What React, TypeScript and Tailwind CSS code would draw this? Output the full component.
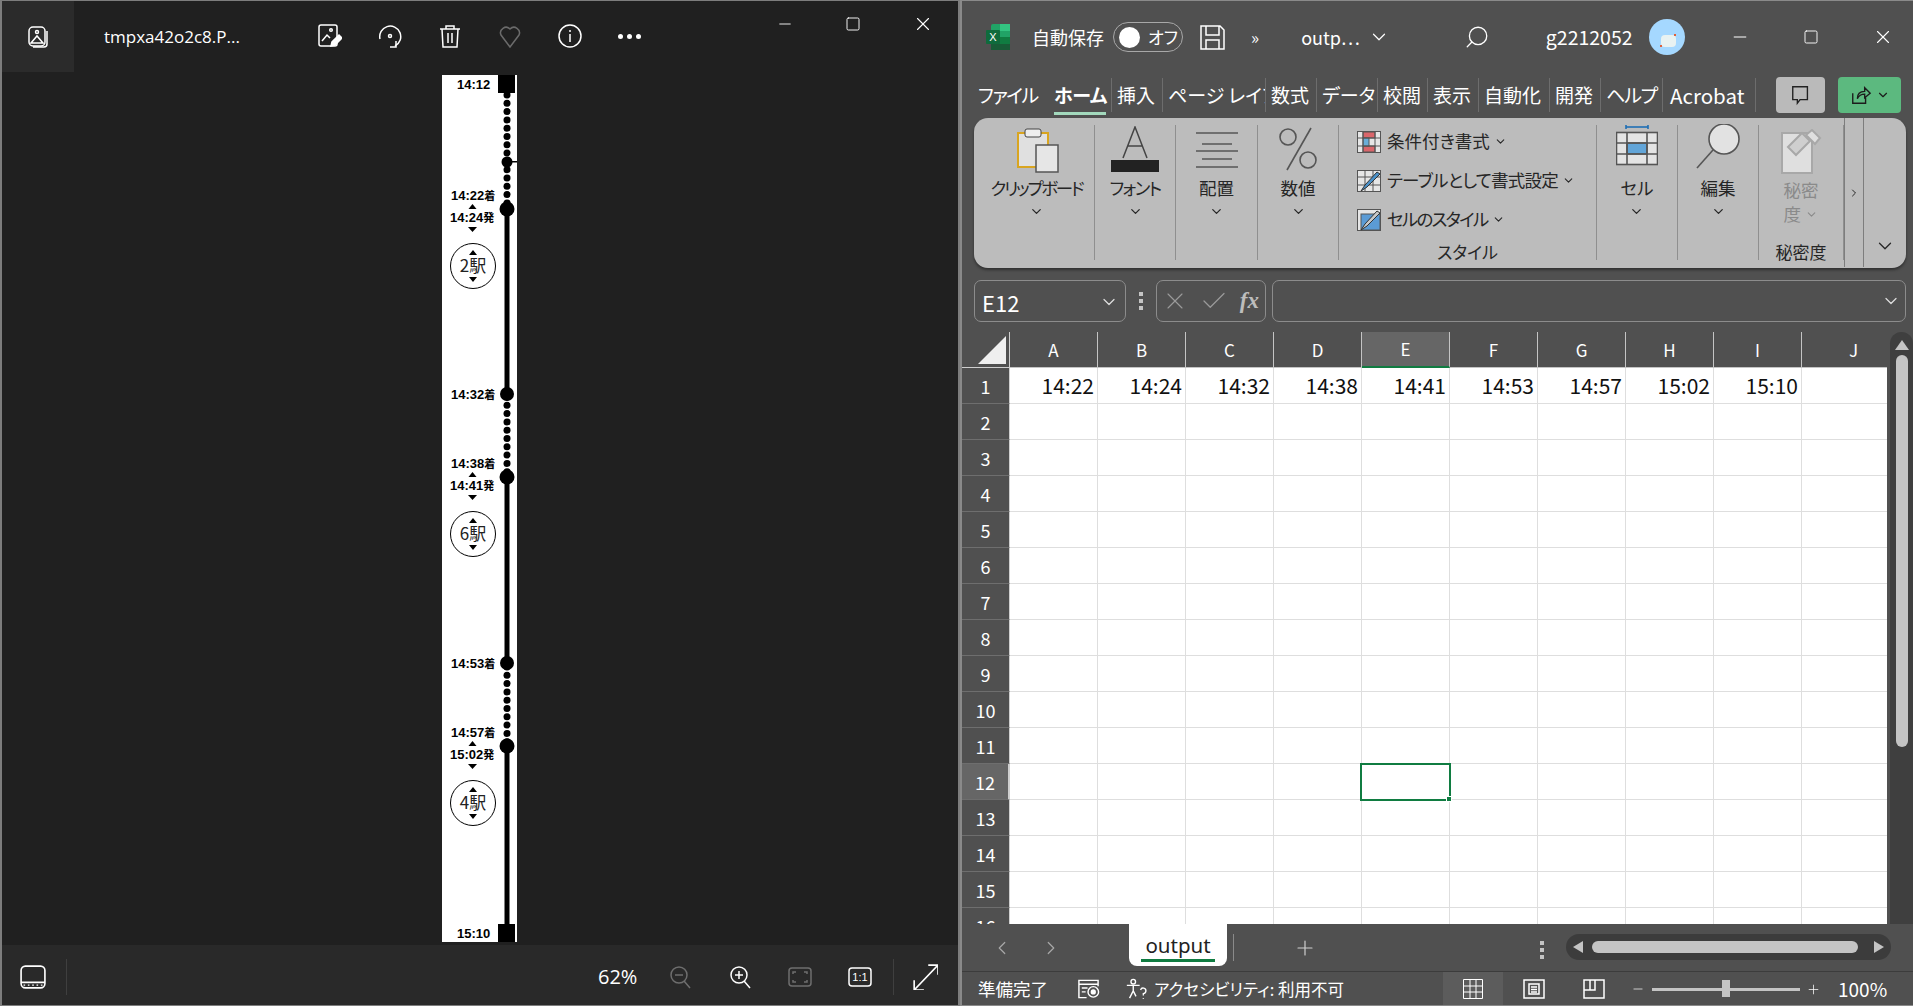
import React from 'react';
import { ChevronDown, ChevronLeft, ChevronRight, Plus, X, Check, Minus, Square, Search } from 'lucide-react';

const Ico: React.FC<{ w?: number; h?: number; vb?: string; className?: string; children: React.ReactNode }> = ({ w = 24, h = 24, vb = '0 0 24 24', className, children }) => (
  <svg width={w} height={h} viewBox={vb} fill="none" stroke="currentColor" strokeWidth={1.5} className={className}>
    {children}
  </svg>
);

function PhotoTopBar() {
  return (
    <div className="flex h-[71px] shrink-0 items-start text-white">
      <div className="flex h-[71px] w-[72px] items-center justify-center bg-[#2b2b2b]">
        <Ico>
          <rect x="3" y="2" width="16" height="19" rx="4" />
          <path d="M21 6v13a3 3 0 0 1-3 3H7" />
          <path d="M5 18l6-7 6 7z" />
          <circle cx="11" cy="7" r="1.5" />
        </Ico>
      </div>
      <div className="ml-[30px] mt-[24px] w-[202px] text-[17px] leading-[24px]">tmpxa42o2c8.P...</div>
      <div className="mt-[23px] flex items-center gap-[36px] pl-[12px]">
        <Ico>
          <rect x="1" y="1" width="18" height="21" rx="2" />
          <path d="M4 17l5-6 3 3" />
          <circle cx="13" cy="6" r="1.3" />
          <path d="M13 22l1-4 7-7 3 3-7 7z" fill="currentColor" />
        </Ico>
        <Ico>
          <path d="M2 15A10.5 10.5 0 1 1 17 22" />
          <circle cx="12" cy="12" r="1.5" />
          <path d="M18 17v6h-6" />
        </Ico>
        <Ico>
          <path d="M2 5h20M8 5V2h8v3M4 5l1 18h14l1-18M10 9v10M14 9v10" />
        </Ico>
        <Ico className="text-[#6b6b6b]">
          <path d="M12 23L3 11a5.5 5.5 0 0 1 9-6 5.5 5.5 0 0 1 9 6z" />
        </Ico>
        <Ico>
          <circle cx="12" cy="12" r="11" />
          <path d="M12 10v8M12 6v2" />
        </Ico>
        <div className="flex gap-[4px]">
          <span className="h-[5px] w-[5px] rounded-full bg-white" />
          <span className="h-[5px] w-[5px] rounded-full bg-white" />
          <span className="h-[5px] w-[5px] rounded-full bg-white" />
        </div>
      </div>
      <div className="ml-auto mr-[24px] mt-[12px] flex items-center gap-[51px]">
        <Minus size={18} strokeWidth={1.2} />
        <Square size={16} strokeWidth={1.4} />
        <X size={22} strokeWidth={1.2} />
      </div>
    </div>
  );
}

type Stop = { arr: string; dep: string; y: number };

// stations with an arrival and a departure time, y measured from the top of the image
const stops: Stop[] = [
  { arr: '14:22', dep: '14:24', y: 134 },
  { arr: '14:38', dep: '14:41', y: 402 },
  { arr: '14:57', dep: '15:02', y: 671 },
];
const circles = [
  { y: 191, label: '2駅' },
  { y: 459, label: '6駅' },
  { y: 728, label: '4駅' },
];

function Dots({ from, to }: { from: number; to: number }) {
  const list = [];
  for (let y = from; y < to; y += 8.3) list.push(y);
  return (
    <>
      {list.map((y) => (
        <circle key={y} cx="65" cy={y} r="3.5" fill="#000" />
      ))}
    </>
  );
}

function Tri({ y, down }: { y: number; down?: boolean }) {
  return <path d={down ? `M26 ${y}h9l-4.5 5z` : `M26.5 ${y}h8l-4-5z`} fill="#000" />;
}

const stripText = "text-[13px] font-bold [font-family:'Liberation_Sans','Noto_Sans_CJK_JP',sans-serif]";

function Strip() {
  return (
    <svg width="75" height="867" viewBox="0 0 75 867" className="block bg-white">
      <rect x="56" y="0" width="17" height="18" fill="#000" />
      <rect x="56" y="849" width="17" height="18" fill="#000" />
      <text x="15" y="14" className={stripText}>14:12</text>
      <text x="15" y="863" className={stripText}>15:10</text>
      <Dots from={20} to={130} />
      <circle cx="65" cy="87" r="5.5" fill="#000" />
      <rect x="65" y="86" width="10" height="1.5" fill="#000" />
      <rect x="62.5" y="134" width="5" height="185" fill="#000" />
      <Dots from={322} to={400} />
      <rect x="62.5" y="402" width="5" height="186" fill="#000" />
      <Dots from={592} to={668} />
      <rect x="62.5" y="671" width="5" height="180" fill="#000" />
      <circle cx="65" cy="319" r="7" fill="#000" />
      <text x="9" y="324" className={stripText}>14:32<tspan fontSize="11">着</tspan></text>
      <circle cx="65" cy="588" r="7" fill="#000" />
      <text x="9" y="593" className={stripText}>14:53<tspan fontSize="11">着</tspan></text>
      {stops.map((s) => (
        <g key={s.arr}>
          <circle cx="65" cy={s.y} r="7.5" fill="#000" />
          <text x="9" y={s.y - 9} className={stripText}>{s.arr}<tspan fontSize="11">着</tspan></text>
          <text x="8" y={s.y + 13} className={stripText}>{s.dep}<tspan fontSize="11">発</tspan></text>
          <Tri y={s.y} />
          <Tri y={s.y + 18} down />
        </g>
      ))}
      {circles.map((c) => (
        <g key={c.label}>
          <circle cx="31" cy={c.y} r="22.5" fill="none" stroke="#000" strokeWidth="1" />
          <path d={`M27 ${c.y - 11}h8l-4-5z M27 ${c.y + 11}h8l-4 5z`} fill="#000" />
          <text x="31" y={c.y + 6} textAnchor="middle" fill="#222" className="text-[17px] [font-family:'Noto_Sans_CJK_JP',sans-serif]">{c.label}</text>
        </g>
      ))}
    </svg>
  );
}

function PhotoBottomBar() {
  return (
    <div className="flex h-[60px] shrink-0 items-center bg-[#292929] pl-[18px] pt-[3px] text-white">
      <Ico w={26} h={26}>
        <rect x="1" y="2" width="22" height="20" rx="4" />
        <path d="M1 17h22M4 20v-1M8 20v-1M12 20v-1M16 20v-1M20 20v-1" />
      </Ico>
      <div className="ml-[20px] h-[36px] w-px bg-[#3f3f3f]" />
      <div className="ml-[531px] w-[44px] text-[20px]">62%</div>
      <Ico className="ml-[27px] text-[#6e6e6e]">
        <circle cx="10" cy="10" r="8" />
        <path d="M6 10h8M15 16l6 7" />
      </Ico>
      <Ico className="ml-[36px]">
        <circle cx="10" cy="10" r="8" />
        <path d="M6 10h8M10 6v8M15 16l6 7" />
      </Ico>
      <Ico className="ml-[35px] text-[#6e6e6e]">
        <rect x="1" y="3" width="22" height="18" rx="3" />
        <path d="M5 9V7h3M16 7h3v2M19 15v2h-3M8 17H5v-2" />
      </Ico>
      <Ico className="ml-[36px]">
        <rect x="1" y="3" width="22" height="18" rx="3" />
        <text x="12" y="16" textAnchor="middle" fontSize="11" fill="currentColor" stroke="none" fontFamily="Liberation Sans">1:1</text>
      </Ico>
      <div className="ml-[21px] h-[36px] w-px bg-[#3f3f3f]" />
      <Ico w={26} h={26} className="ml-[18px]">
        <path d="M2 15v9h9M15 1h9v9M2 24L24 1" />
      </Ico>
    </div>
  );
}

function PhotoWindow() {
  return (
    <div className="flex h-full w-[960px] shrink-0 flex-col border-x-2 border-y-[1px] border-[#7d7d7d] bg-[#202020] [font-family:'Open_Sans',sans-serif]">
      <PhotoTopBar />
      <div className="flex flex-1 items-center justify-start overflow-hidden pl-[440px]">
        <Strip />
      </div>
      <PhotoBottomBar />
    </div>
  );
}

function ExcelTitleBar() {
  return (
    <div className="flex h-[72px] shrink-0 items-center text-white">
      <svg width="24" height="26" viewBox="0 0 24 26" className="ml-[24px]">
        <rect x="5" y="0" width="19" height="26" rx="2" fill="#21a366" />
        <rect x="14" y="0" width="10" height="7" fill="#33c481" />
        <rect x="5" y="13" width="19" height="7" fill="#107c41" />
        <rect x="5" y="20" width="19" height="6" fill="#185c37" />
        <rect x="0" y="6" width="14" height="14" rx="1" fill="#0f6b3c" />
        <text x="7" y="17" textAnchor="middle" fontSize="11" fill="#fff" fontFamily="Liberation Sans">X</text>
      </svg>
      <span className="ml-[22px] text-[18px]">自動保存</span>
      <div className="ml-[9px] flex h-[30px] w-[70px] items-center rounded-full border border-[#a8a8a8] pl-[5px]">
        <span className="h-[21px] w-[21px] rounded-full bg-white" />
        <span className="ml-[8px] text-[17px]">オフ</span>
      </div>
      <Ico w={27} h={27} vb="0 0 27 27" className="ml-[16px]">
        <path d="M2 2h19l4 4v19H2zM7 2v9h13V2M7 25v-9h13v9" />
      </Ico>
      <span className="ml-[25px] text-[17px]">»</span>
      <span className="ml-[42px] text-[18px]">outp…</span>
      <ChevronDown size={22} strokeWidth={1.3} className="ml-[8px]" />
      <Search size={26} strokeWidth={1.2} className="ml-[74px] -scale-x-100" />
      <span className="ml-[56px] text-[19.5px]">g2212052</span>
      <div className="relative ml-[16px] h-[36px] w-[36px] overflow-hidden rounded-full bg-[#a5d8ff]">
        <span className="absolute left-[12px] top-[16px] h-[12px] w-[15px] rounded-[4px] bg-[#e8f2f2]" />
        <span className="absolute left-[11px] top-[26px] h-[2px] w-[2px] bg-[#e0603a]" />
        <span className="absolute left-[25px] top-[15px] h-[2px] w-[2px] bg-[#e0603a]" />
      </div>
      <Minus size={20} strokeWidth={1.2} className="ml-[45px]" />
      <Square size={16} strokeWidth={1.4} className="ml-[53px]" />
      <X size={22} strokeWidth={1.2} className="ml-[53px]" />
    </div>
  );
}

const tabs: { label: string; w: string; extra?: string }[] = [
  { label: '挿入', w: 'w-[51px]' },
  { label: 'ページ レイアウト', w: 'w-[103px]' },
  { label: '数式', w: 'w-[51px]' },
  { label: 'データ', w: 'w-[61px]' },
  { label: '校閲', w: 'w-[50px]' },
  { label: '表示', w: 'w-[51px]' },
  { label: '自動化', w: 'w-[71px]' },
  { label: '開発', w: 'w-[51px]' },
  { label: 'ヘルプ', w: 'w-[62px]', extra: 'tracking-[-0.06em]' },
  { label: 'Acrobat', w: 'w-[93px]', extra: 'pl-[7px] text-[20.5px]' },
];

function ExcelTabs() {
  return (
    <div className="flex h-[45px] shrink-0 items-start pt-[5px] text-[19px] text-white">
      <span className="ml-[16px] w-[76px] leading-[34px] tracking-[-0.08em]">ファイル</span>
      <div className="relative w-[57px] font-bold leading-[34px] tracking-[-0.02em]">
        ホーム
        <span className="absolute bottom-[-3px] left-0 h-[3px] w-[52px] bg-[#a3d9bd]" />
      </div>
      {tabs.map((t) => (
        <div key={t.label} className={`h-[34px] overflow-hidden border-l border-[#6d6d6d] px-[5px] leading-[34px] whitespace-nowrap ${t.w} ${t.extra ?? ''}`}>
          {t.label}
        </div>
      ))}
      <div className="h-[34px] border-l border-[#6d6d6d]" />
      <div className="ml-[20px] -mt-[1px] flex h-[36px] w-[49px] items-center justify-center rounded-[4px] bg-[#bababa] text-[#222]">
        <Ico w={22} h={24}>
          <path d="M3 3h16v14h-8l-3 4v-4H3z" />
        </Ico>
      </div>
      <div className="ml-[13px] -mt-[1px] flex h-[36px] w-[63px] items-center justify-center gap-[4px] rounded-[4px] bg-[#5cb97f] text-[#1c1c1c]">
        <Ico w={22} h={24}>
          <path d="M3 10v11h14v-6M8 16c0-6 4-8 8-8V4l6 6-6 5v-4c-3 0-6 1-8 5z" />
        </Ico>
        <ChevronDown size={14} strokeWidth={2} />
      </div>
    </div>
  );
}

function LabelBtn({ label, className }: { label: string; className?: string }) {
  return (
    <div className="flex flex-col items-center">
      <span className={`mt-[3px] text-[17.5px] leading-[26px] whitespace-nowrap ${className ?? ''}`}>{label}</span>
      <ChevronDown size={15} strokeWidth={2} className="mt-[3px]" />
    </div>
  );
}

const Group: React.FC<{ w: string; children: React.ReactNode; title?: string }> = ({ w, children, title }) => (
  <div className={`relative flex h-[135px] flex-col items-center border-r border-[#8f8f8f] ${w}`}>
    {children}
    {title && <span className="absolute bottom-[-4px] left-0 right-0 text-center text-[17px] leading-[24px]">{title}</span>}
  </div>
);

function StyleRow({ icon, label, className }: { icon: React.ReactNode; label: string; className?: string }) {
  return (
    <div className="flex h-[39px] items-center">
      {icon}
      <span className={`ml-[6px] text-[17.5px] whitespace-nowrap ${className ?? ''}`}>{label}</span>
      <ChevronDown size={13} strokeWidth={2} className="ml-[4px]" />
    </div>
  );
}

function Ribbon() {
  return (
    <div className="ml-[12px] mr-[7px] flex h-[150px] shrink-0 items-start rounded-[14px] bg-[#bcbcbc] pt-[7px] text-[#262626] shadow-[0_2px_3px_rgba(0,0,0,0.4)]">
      <Group w="w-[121px] pl-[5px]">
        <svg width="42" height="46" viewBox="0 0 42 46" className="ml-[3px] mt-[2px]">
          <rect x="1" y="6" width="30" height="34" fill="#e0e0e0" stroke="#d9a520" strokeWidth="2" />
          <rect x="8" y="2" width="16" height="8" rx="2" fill="#eee" stroke="#444" />
          <rect x="19" y="18" width="22" height="27" fill="#e6e6e6" stroke="#555" strokeWidth="1.5" />
        </svg>
        <div className="-mt-[1px]">
          <LabelBtn label="クリップボード" className="tracking-[-0.13em]" />
        </div>
      </Group>
      <Group w="w-[81px]">
        <svg width="48" height="46" viewBox="0 0 48 46" className="mt-[1px]">
          <path d="M12 32L24 1l12 31M17 20h14" fill="none" stroke="#444" strokeWidth="1.5" />
          <rect x="0" y="34" width="48" height="12" fill="#222" />
        </svg>
        <LabelBtn label="フォント" className="tracking-[-0.09em]" />
      </Group>
      <Group w="w-[82px]">
        <svg width="42" height="46" viewBox="0 0 42 46" className="mt-[1px]" stroke="#555" strokeWidth="1.5">
          <path d="M0 7h42M6 18h30M0 25h42M6 33h30M0 41h42" />
        </svg>
        <LabelBtn label="配置" />
      </Group>
      <Group w="w-[81px]">
        <svg width="38" height="46" viewBox="0 0 38 46" className="mt-[1px]" fill="none" stroke="#555" strokeWidth="1.6">
          <circle cx="9" cy="11" r="8" />
          <circle cx="29" cy="34" r="8" />
          <path d="M32 2L8 44" />
        </svg>
        <LabelBtn label="数値" />
      </Group>
      <Group w="w-[258px]" title="スタイル">
        <div className="mt-[-3px] flex w-full flex-col pl-[18px]">
          <StyleRow
            label="条件付き書式"
            icon={
              <svg width="24" height="22" viewBox="0 0 24 22" stroke="#555">
                <rect x="0.5" y="0.5" width="23" height="21" fill="#e6e6e6" />
                <rect x="6" y="1" width="12" height="6" fill="#d9666b" />
                <rect x="6" y="15" width="12" height="6" fill="#d9666b" />
                <rect x="6" y="7" width="6" height="8" fill="#6aaed8" />
                <path d="M6 0v22M18 0v22M0 7h24M0 15h24" />
              </svg>
            }
          />
          <StyleRow
            label="テーブルとして書式設定"
            className="tracking-[-0.045em]"
            icon={
              <svg width="24" height="22" viewBox="0 0 24 22" stroke="#555">
                <rect x="0.5" y="0.5" width="23" height="21" fill="#e6e6e6" />
                <path d="M8 0v22M16 0v22M0 7h24M0 15h24" />
                <path d="M4 21l4-6 12-13 3 2-13 13z" fill="#4a90c8" stroke="#333" />
              </svg>
            }
          />
          <StyleRow
            label="セルのスタイル"
            className="tracking-[-0.1em]"
            icon={
              <svg width="24" height="22" viewBox="0 0 24 22" stroke="#555">
                <rect x="0.5" y="0.5" width="23" height="21" fill="#e6e6e6" />
                <rect x="4" y="5" width="19" height="16" fill="#5b9bd5" />
                <path d="M4 21l4-6 12-13 3 2-13 13z" fill="#c8c8c8" stroke="#333" />
              </svg>
            }
          />
        </div>
      </Group>
      <Group w="w-[81px]">
        <svg width="42" height="46" viewBox="0 0 42 46" className="mt-[-1px]" stroke="#555" strokeWidth="1.6">
          <path d="M10 3h22" stroke="#1f6fb5" />
          <path d="M10 1v4M32 1v4" stroke="#1f6fb5" />
          <rect x="0.5" y="8.5" width="41" height="32" fill="#e4e4e4" />
          <rect x="11" y="19" width="20" height="11" fill="#62a5d8" />
          <path d="M11 8v32M31 8v32M0 19h42M0 30h42" />
        </svg>
        <div className="mt-[2px]">
          <LabelBtn label="セル" />
        </div>
      </Group>
      <Group w="w-[81px]">
        <svg width="44" height="46" viewBox="0 0 44 46" className="mt-[-1px]" stroke="#555" strokeWidth="1.6">
          <circle cx="28" cy="15" r="15" fill="#e2e2e2" />
          <path d="M17 26L1 44" />
        </svg>
        <div className="mt-[2px]">
          <LabelBtn label="編集" />
        </div>
      </Group>
      <Group w="w-[85px]" title="秘密度">
        <svg width="42" height="46" viewBox="0 0 42 46" className="mt-[4px]" stroke="#a8a8a8" strokeWidth="2">
          <rect x="2" y="4" width="30" height="40" fill="#dfdfdf" />
          <path d="M8 18l14-14 8 8-14 14z" fill="#cfcfcf" />
          <path d="M26 6l6-5 8 8-5 6z" fill="#dfdfdf" />
        </svg>
        <div className="mt-[3px] text-center text-[17.5px] leading-[24px] text-[#8a8a8a]">
          <div>秘密</div>
          <div className="flex items-center">度<ChevronDown size={13} strokeWidth={2} className="ml-[4px]" /></div>
        </div>
      </Group>
      <div className="-mt-[7px] flex h-[149px] w-[20px] items-center justify-center border-x border-[#7d7d7d]">
        <ChevronRight size={12} strokeWidth={2} />
      </div>
      <div className="flex h-[135px] flex-1 items-end justify-center pb-[3px]">
        <ChevronDown size={22} strokeWidth={1.4} />
      </div>
    </div>
  );
}

function FormulaBar() {
  return (
    <div className="flex h-[64px] shrink-0 items-start pl-[12px] pr-[7px] pt-[12px] text-white">
      <div className="flex h-[42px] w-[152px] items-center justify-between rounded-[7px] border border-[#8c8c8c] pl-[7px] pr-[6px] pt-[2px] text-[22px]">
        E12
        <ChevronDown size={20} strokeWidth={1.5} className="text-[#ddd]" />
      </div>
      <div className="mx-[13px] flex h-[42px] flex-col items-center justify-center gap-[3px]">
        <span className="h-[4px] w-[4px] bg-[#c4c4c4]" />
        <span className="h-[4px] w-[4px] bg-[#c4c4c4]" />
        <span className="h-[4px] w-[4px] bg-[#c4c4c4]" />
      </div>
      <div className="flex h-[42px] w-[110px] items-center justify-between rounded-[7px] border border-[#8c8c8c] px-[4px] text-[#9a9a9a]">
        <X size={28} strokeWidth={1} />
        <Check size={30} strokeWidth={1} />
        <span className="pr-[2px] text-[23px] font-bold italic text-[#bdbdbd] [font-family:'Liberation_Serif',serif]">fx</span>
      </div>
      <div className="ml-[6px] flex h-[42px] flex-1 items-center justify-end rounded-[7px] border border-[#8c8c8c] pr-[4px]">
        <ChevronDown size={20} strokeWidth={1.5} className="text-[#ddd]" />
      </div>
    </div>
  );
}

const cols = ['A', 'B', 'C', 'D', 'E', 'F', 'G', 'H', 'I', 'J'];
const times = ['14:22', '14:24', '14:32', '14:38', '14:41', '14:53', '14:57', '15:02', '15:10', ''];
const rows = Array.from({ length: 16 }, (_, i) => i + 1);

function Sheet() {
  return (
    <div className="relative h-[592px] shrink-0 overflow-hidden">
      <div className="grid w-[944px] auto-rows-[36px] grid-cols-[48px_repeat(9,88px)_104px]">
        <div className="relative border-r border-b border-[#cfcfcf]">
          <span className="absolute bottom-[3px] right-[3px] h-0 w-0 border-b-[28px] border-l-[28px] border-b-[#efefef] border-l-transparent" />
        </div>
        {cols.map((c) => (
          <div key={c} className={`flex items-center justify-center border-r border-b border-[#c4c4c4] text-[17px] text-white ${c === 'E' ? 'border-b-2 border-b-[#107c41] bg-[#666666]' : ''}`}>
            {c}
          </div>
        ))}
        {rows.map((r) => (
          <React.Fragment key={r}>
            <div className={`flex items-center justify-center border-b border-r border-b-[#6e6e6e] border-r-[#cfcfcf] pt-[1px] text-[18px] text-white ${r === 12 ? 'border-r-2 border-r-[#107c41] bg-[#666666]' : ''}`}>
              {r}
            </div>
            {cols.map((c, i) => (
              <div key={c} className="flex items-center justify-end border-b border-r border-[#dedede] bg-white pr-[3px] text-[21px] text-[#111]">
                {r === 1 ? times[i] : ''}
              </div>
            ))}
          </React.Fragment>
        ))}
      </div>
      {/* selected cell E12 */}
      <div className="absolute left-[398px] top-[431px] h-[38px] w-[91px] border-2 border-[#107c41]">
        <span className="absolute -bottom-[3px] -right-[3px] h-[6px] w-[6px] border border-white bg-[#107c41]" />
      </div>
      {/* vertical scrollbar */}
      <div className="absolute bottom-0 right-0 top-0 w-[26px] bg-[#505050]">
        <div className="ml-[3px] flex h-full w-[23px] flex-col items-center rounded-t-full bg-[#3f3f3f]">
          <span className="mt-[8px] h-0 w-0 border-x-[7px] border-b-[10px] border-x-transparent border-b-[#c4c4c4]" />
          <span className="mt-[5px] h-[392px] w-[12px] rounded-full bg-[#c4c4c4]" />
        </div>
      </div>
    </div>
  );
}

function SheetTabs() {
  return (
    <div className="flex h-[48px] shrink-0 items-start border-b border-[#3c3c3c] text-[#a8a8a8]">
      <ChevronLeft size={22} strokeWidth={1.3} className="ml-[29px] mt-[13px]" />
      <ChevronRight size={22} strokeWidth={1.3} className="ml-[27px] mt-[13px]" />
      <div className="relative ml-[67px] h-[42px] w-[98px] rounded-b-[8px] bg-white text-center text-[20.5px] leading-[42px] text-[#222] [font-family:'Noto_Sans',sans-serif]">
        output
        <span className="absolute bottom-[4px] left-[12px] h-[3px] w-[74px] bg-[#107c41]" />
      </div>
      <div className="ml-[6px] mt-[10px] h-[27px] w-px bg-[#8a8a8a]" />
      <Plus size={24} strokeWidth={1.2} className="ml-[59px] mt-[12px] text-[#cfcfcf]" />
      <div className="ml-[223px] mt-[17px] flex flex-col gap-[3px]">
        <span className="h-[4px] w-[4px] bg-[#c4c4c4]" />
        <span className="h-[4px] w-[4px] bg-[#c4c4c4]" />
        <span className="h-[4px] w-[4px] bg-[#c4c4c4]" />
      </div>
      <div className="ml-[22px] mt-[10px] flex h-[26px] w-[325px] items-center rounded-full bg-[#3c3c3c] px-[7px]">
        <span className="h-0 w-0 border-y-[6px] border-r-[10px] border-y-transparent border-r-[#c4c4c4]" />
        <span className="ml-[9px] h-[12px] w-[266px] rounded-full bg-[#c4c4c4]" />
        <span className="ml-auto h-0 w-0 border-y-[6px] border-l-[10px] border-y-transparent border-l-[#c4c4c4]" />
      </div>
    </div>
  );
}

function StatusBar() {
  return (
    <div className="flex h-[33px] shrink-0 items-center pt-[1px] text-white">
      <span className="ml-[16px] text-[17.5px]">準備完了</span>
      <Ico w={23} h={20} vb="0 0 24 20" className="ml-[29px]">
        <path d="M2 10V1h20v6M2 5h20M2 10v9h8M5 9h6M5 13h4" />
        <circle cx="17" cy="13" r="5.5" />
        <circle cx="17" cy="13" r="2" fill="currentColor" />
      </Ico>
      <Ico w={24} h={22} className="ml-[24px]">
        <circle cx="9" cy="4" r="2.5" />
        <path d="M2 8h14M9 8v6l-4 8M9 14l3 6" />
        <path d="M17 13a3 3 0 1 1 3 4v2M20 22v1" />
      </Ico>
      <span className="ml-[6px] w-[289px] text-[16.5px] whitespace-nowrap">アクセシビリティ: 利用不可</span>
      <div className="-mt-[1px] flex h-[33px] w-[60px] items-center justify-center bg-[#5c5c5c]">
        <svg width="20" height="20" viewBox="0 0 20 20" fill="none" stroke="currentColor">
          <path d="M.5.5h19v19H.5zM7 0v20M13 0v20M0 7h20M0 13h20" />
        </svg>
      </div>
      <Ico w={22} h={20} vb="0 0 22 20" className="ml-[20px]">
        <rect x="1" y="1" width="20" height="18" />
        <path d="M6 5h10v10H6zM8 8h6M8 10.5h6M8 13h6" />
      </Ico>
      <Ico w={22} h={20} vb="0 0 22 20" className="ml-[38px]">
        <rect x="1" y="1" width="20" height="18" />
        <path d="M1 11h11V1M7 1v10" />
      </Ico>
      <Minus size={14} strokeWidth={1.2} className="ml-[26px]" />
      <div className="relative ml-[7px] h-[3px] w-[148px] bg-[#c4c4c4]">
        <span className="absolute -top-[8px] left-[70px] h-[17px] w-[8px] bg-[#c4c4c4]" />
      </div>
      <Plus size={15} strokeWidth={1.2} className="ml-[6px]" />
      <span className="ml-[17px] text-[19px] whitespace-nowrap">100%</span>
    </div>
  );
}

function ExcelWindow() {
  return (
    <div className="flex h-full min-w-0 flex-1 flex-col border-y-[1px] border-l-2 border-[#8a8a8a] bg-[#505050] [font-family:'Noto_Sans_CJK_JP','Noto_Sans',sans-serif] [font-feature-settings:'palt']">
      <ExcelTitleBar />
      <ExcelTabs />
      <Ribbon />
      <FormulaBar />
      <Sheet />
      <SheetTabs />
      <StatusBar />
    </div>
  );
}

export default function App() {
  return (
    <div className="flex h-[1006px] w-[1913px] overflow-hidden">
      <PhotoWindow />
      <ExcelWindow />
    </div>
  );
}
